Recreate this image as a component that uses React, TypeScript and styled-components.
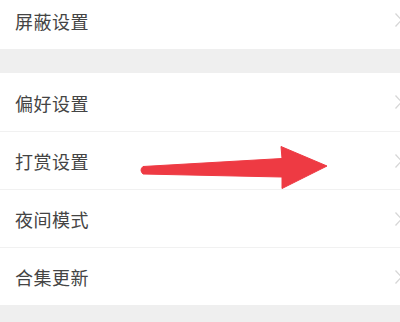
import React from 'react';
import styled, { createGlobalStyle } from 'styled-components';

const GlobalStyle = createGlobalStyle`
  html, body {
    margin: 0;
    padding: 0;
    background: #ffffff;
    overflow: hidden;
  }
  body {
    font-family: "Noto Sans CJK SC", "Noto Sans", sans-serif;
  }
`;

interface Group {
  items: string[];
}

const groups: Group[] = [
  { items: ['屏蔽设置'] },
  { items: ['偏好设置', '打赏设置', '夜间模式', '合集更新'] },
];

function Chevron() {
  return (
    <svg width="10" height="16" viewBox="0 0 10 16">
      <path d="M1.5 1.5 L7.5 8 L1.5 14.5" fill="none" stroke="#d6d6d6" strokeWidth="1.3" />
    </svg>
  );
}

function RedArrow() {
  return (
    <ArrowLayer width="400" height="322" viewBox="0 0 400 322">
      <path
        d="M143 166.5 L282 158.5 L281 146.5 L327 166 L282 188.5 L282 177 L143 174 Q139 170 143 166.5 Z"
        fill="#ee3a43"
        stroke="#ee3a43"
        strokeWidth="1"
        strokeLinejoin="round"
      />
    </ArrowLayer>
  );
}

function App() {
  return (
    <Page>
      <GlobalStyle />
      <List>
        {groups.map((group, gi) => (
          <React.Fragment key={gi}>
            {gi > 0 && <Gap />}
            <Section>
              {group.items.map((label, i) => (
                <Row key={label} divided={i > 0}>
                  <Label>{label}</Label>
                  <Chevron />
                </Row>
              ))}
            </Section>
          </React.Fragment>
        ))}
        <Gap />
      </List>
      <RedArrow />
    </Page>
  );
}

const Page = styled.div`
  position: relative;
  width: 400px;
  height: 322px;
  overflow: hidden;
  background: #fff;
`;

const List = styled.div`
  display: flex;
  flex-direction: column;
  margin-top: -9px;
`;

const Section = styled.div`
  display: flex;
  flex-direction: column;
  background: #fff;
`;

const Gap = styled.div`
  height: 24px;
  background: #efefef;
`;

const Row = styled.div<{ divided: boolean }>`
  display: flex;
  align-items: center;
  justify-content: space-between;
  height: 58px;
  padding: 0 0 0 15px;
  margin-right: -4px;
  box-sizing: border-box;
  border-top: ${({ divided }) => (divided ? '1px solid #f1f1f1' : 'none')};
`;

const Label = styled.span`
  font-size: 18px;
  color: #444444;
  letter-spacing: 0.5px;
  margin-top: 1px;
`;

const ArrowLayer = styled.svg`
  position: absolute;
  left: 0;
  top: 0;
  pointer-events: none;
`;

export default App;
